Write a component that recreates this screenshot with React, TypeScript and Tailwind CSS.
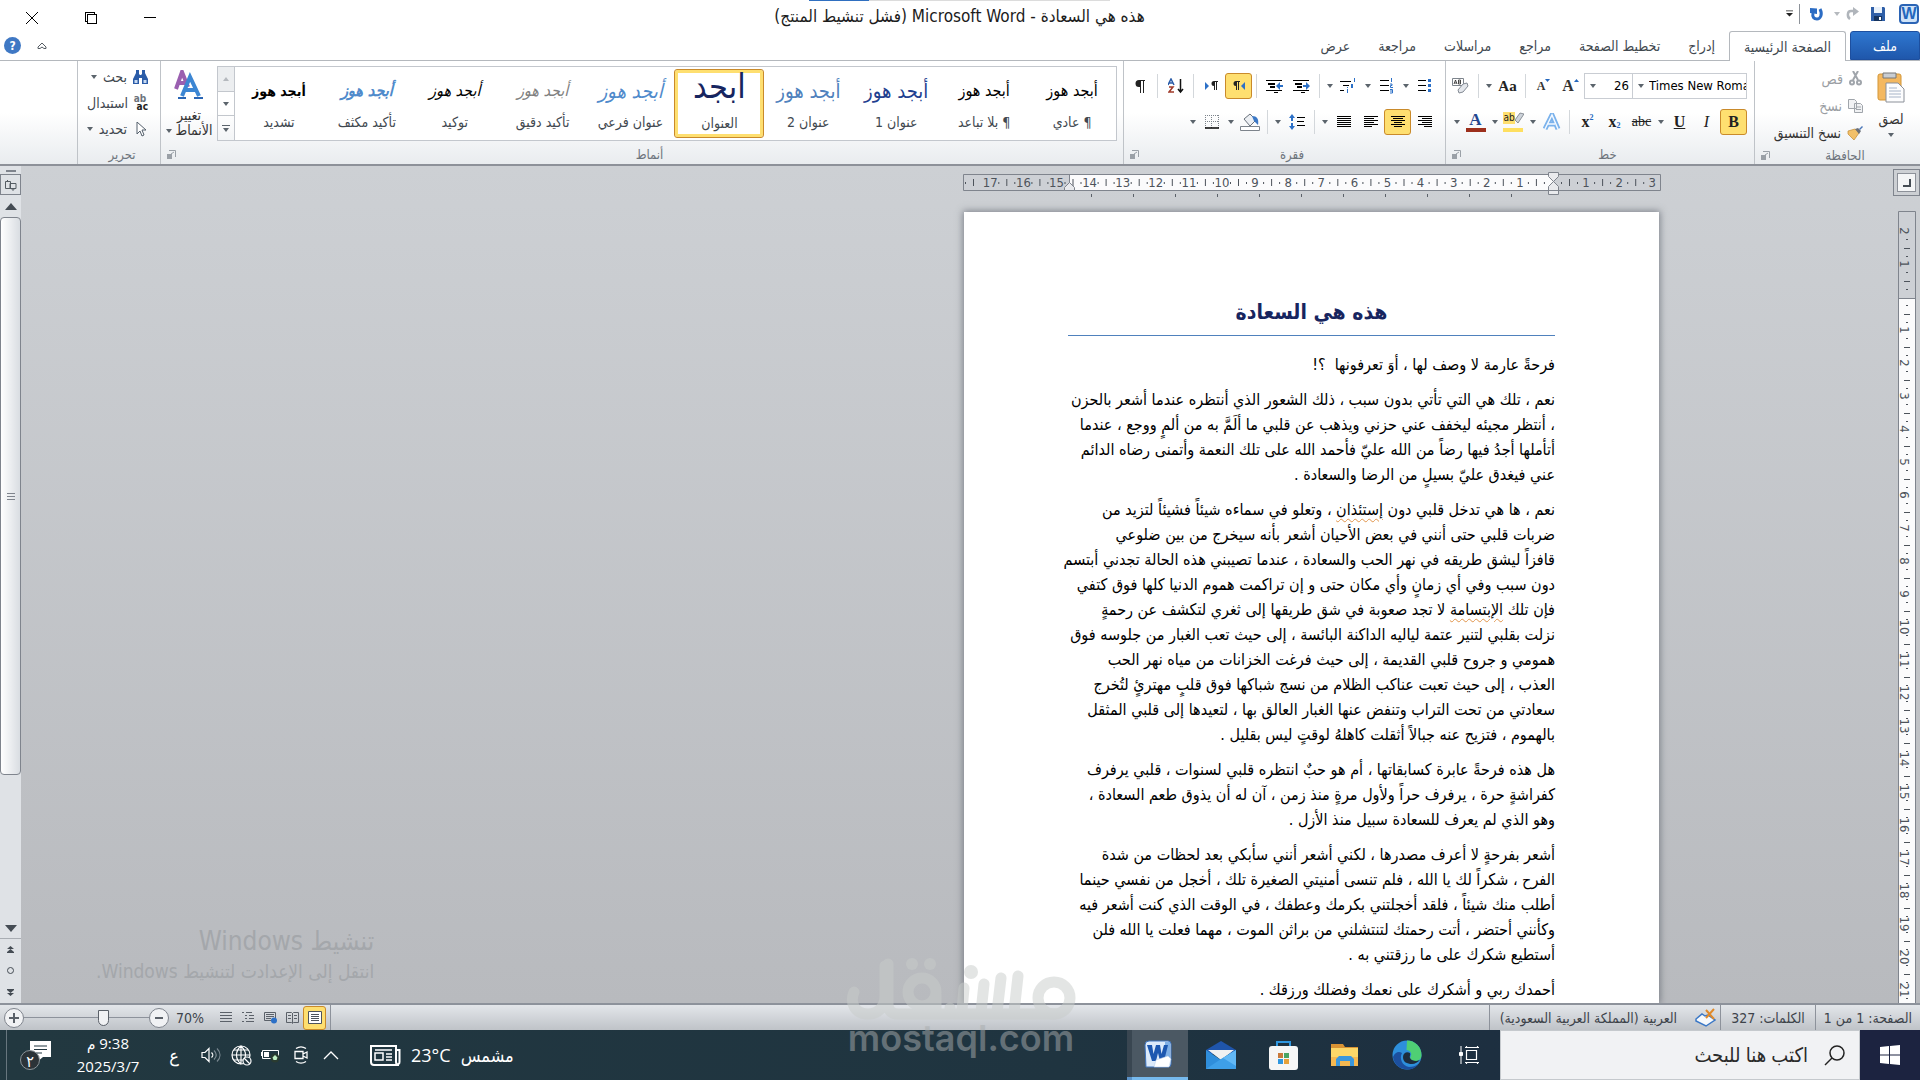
import type { ReactNode } from 'react'
import clsx from 'clsx'

const DOC_TITLE = 'هذه هي السعادة'

const PARAGRAPHS: string[][] = [
  ['فرحةً عارمة لا وصف لها ، أوَ تعرفونها  ؟!'],
  [
    'نعم ، تلك هي التي تأتي بدون سبب ، ذلك الشعور الذي أنتظره عندما أشعر بالحزن',
    '، أنتظر مجيئه ليخفف عني حزني ويذهب عن قلبي ما ألَمَّ به من ألمٍ ووجع ، عندما',
    'أتأملها أجدُ فيها رضاً من الله عليّ فأحمد الله على تلك النعمة وأتمنى رضاه الدائم',
    'عني فيغدق عليّ بسيلٍ من الرضا والسعادة .',
  ],
  [
    'نعم ، ها هي تدخل قلبي دون *إستئذان* ، وتعلو في سماءه شيئاً فشيئاً لتزيد من',
    'ضربات قلبي حتى أنني في بعض الأحيان أشعر بأنه سيخرج من بين ضلوعي',
    'قافزاً ليشق طريقه في نهر الحب والسعادة ، عندما تصيبني هذه الحالة تجدني أبتسم',
    'دون سبب وفي أي زمانٍ وأي مكان حتى و إن تراكمت هموم الدنيا كلها فوق كتفي',
    'فإن تلك *الإبتسامة* لا تجد صعوبة في شق طريقها إلى ثغري لتكشف عن رحمةٍ',
    'نزلت بقلبي لتنير عتمة لياليه الداكنة البائسة ، إلى حيث تعب الغبار من جلوسه فوق',
    'همومي و جروح قلبي القديمة ، إلى حيث فرغت الخزانات من مياه نهر الحب',
    'العذب ، إلى حيث تعبت عناكب الظلام من نسج شباكها فوق قلبٍ مهترئٍ لتُخرج',
    'سعادتي من تحت التراب وتنفض عنها الغبار العالق بها ، لتعيدها إلى قلبي المثقل',
    'بالهموم ، فتزيح عنه جبالاً أثقلت كاهلهُ لوقتٍ ليس بقليل .',
  ],
  [
    'هل هذه فرحةً عابرة كسابقاتها ، أم هو حبٌ انتظره قلبي لسنوات ، قلبي يرفرف',
    'كفراشةٍ حرة ، يرفرف حراً ولأول مرةٍ منذ زمن ، آن له أن يذوق طعم السعادة ،',
    'وهو الذي لم يعرف للسعادة سبيل منذ الأزل .',
  ],
  [
    'أشعر بفرحةٍ لا أعرف مصدرها ، لكني أشعر أنني سأبكي بعد لحظات من شدة',
    'الفرح ، شكراً لك يا الله ، فلم تنسى أمنيتي الصغيرة تلك ، أخجل من نفسي حينما',
    'أطلب منك شيئاً ، فلقد أخجلتني بكرمك وعطفك ، في الوقت الذي كنت أشعر فيه',
    'وكأنني أحتضر ، أتت رحمتك لتنتشلني من براثن الموت ، مهما فعلت يا الله فلن',
    'أستطيع شكرك على ما رزقتني به .',
  ],
  ['أحمدك ربي و أشكرك على نعمك وفضلك ورزقك .'],
]

interface StyleTile {
  label: string
  sample: string
  look: string
  active?: boolean
}

const STYLE_TILES: StyleTile[] = [
  { label: '¶ عادي', sample: 'أبجد هوز', look: 'text-base text-black' },
  { label: '¶ بلا تباعد', sample: 'أبجد هوز', look: 'text-base text-black' },
  { label: 'عنوان 1', sample: 'أبجد هوز', look: 'text-xl text-[#1f3f8f]' },
  { label: 'عنوان 2', sample: 'أبجد هوز', look: 'text-xl text-[#4f81bd]' },
  { label: 'العنوان', sample: 'ابجد', look: 'pb-3 text-[34px] leading-8 text-[#17255f]', active: true },
  { label: 'عنوان فرعي', sample: 'أبجد هوز', look: 'text-xl italic text-[#4f8acb]' },
  { label: 'تأكيد دقيق', sample: 'أبجد هوز', look: 'text-base italic text-[#808080]' },
  { label: 'توكيد', sample: 'أبجد هوز', look: 'text-base italic text-black' },
  { label: 'تأكيد مكثف', sample: 'أبجد هوز', look: 'text-base italic font-bold text-[#4f8acb]' },
  { label: 'تشديد', sample: 'أبجد هوز', look: 'text-sm font-bold text-black' },
]

const TABS = ['إدراج', 'تخطيط الصفحة', 'مراجع', 'مراسلات', 'مراجعة', 'عرض']

/* ---------- small shared pieces ---------- */

function Caret({ faded }: { faded?: boolean }) {
  return (
    <svg width="6" height="4" viewBox="0 0 6 4" className="shrink-0">
      <path d="M0 0h6L3 4z" fill={faded ? '#b5b9be' : '#5b646c'} />
    </svg>
  )
}

function Sep() {
  return (
    <span className="flex w-[9px] justify-center">
      <span className="h-6 w-px bg-[#d3d7db]" />
    </span>
  )
}

interface ToolProps {
  label: string
  active?: boolean
  children: ReactNode
}

function Tool({ label, active, children }: ToolProps) {
  return (
    <button
      dir="ltr"
      aria-label={label}
      aria-pressed={active}
      className={clsx(
        'flex h-[26px] w-[27px] shrink-0 items-center justify-center rounded-[3px]',
        active && 'border border-[#c98a2b] bg-[#fedf70]',
      )}
    >
      {children}
    </button>
  )
}

function SplitTool({ label, children }: ToolProps) {
  return (
    <div className="flex h-[26px] w-[38px] shrink-0 items-center">
      <button dir="ltr" aria-label={label} className="flex h-full w-[27px] items-center justify-center">
        {children}
      </button>
      <button aria-label={`خيارات ${label}`} className="flex h-full w-[11px] items-center justify-center">
        <Caret />
      </button>
    </div>
  )
}

interface GroupProps {
  title: string
  launcher?: boolean
  className: string
  children: ReactNode
}

function Group({ title, launcher, className, children }: GroupProps) {
  return (
    <section className={clsx('flex flex-col border-l border-[#bfc3c8]', className)}>
      <div className="flex-1">{children}</div>
      <div className="flex h-[19px] items-center pl-1.5 text-[13px] text-[#6d747c]">
        <h2 className="flex-1 text-center">{title}</h2>
        {launcher && (
          <button aria-label={`إعدادات ${title}`}>
            <svg width="9" height="9" viewBox="0 0 9 9" fill="none">
              <path d="M2 .5h6.500v6.500" stroke="#9aa0a7" />
              <path d="M0 4h5v5H0z" fill="#9aa0a7" />
              <path d="M4 4l3-2" stroke="#9aa0a7" />
            </svg>
          </button>
        )}
      </div>
    </section>
  )
}

function Lines({ rows }: { rows: [number, number][] }) {
  return (
    <svg width="16" height="13" viewBox="0 0 16 13" shapeRendering="crispEdges">
      {rows.map(([x, w], i) => (
        <rect key={i} x={x} y={i * 2} width={w} height="1" fill="#000" />
      ))}
    </svg>
  )
}

const ALIGN_RIGHT: [number, number][] = [[1, 14], [5, 10], [1, 14], [5, 10], [1, 14], [7, 8]]
const ALIGN_CENTER: [number, number][] = [[1, 14], [3, 10], [1, 14], [4, 8], [1, 14], [4, 8]]
const ALIGN_LEFT: [number, number][] = [[1, 14], [1, 10], [1, 14], [1, 10], [1, 14], [1, 8]]
const ALIGN_FULL: [number, number][] = [[1, 14], [1, 14], [1, 14], [1, 14], [1, 14], [1, 14]]

function WordLogo({ size }: { size: number }) {
  return (
    <svg width={size} height={size} viewBox="0 0 28 28">
      <path d="M5 1h19a3 3 0 013 3v20a3 3 0 01-3 3H2L1 5a4 4 0 014-4z" fill="#dceafa" stroke="#3f74be" />
      <path d="M21 2h5v16h-5z" fill="#7fb0e6" />
      <path d="M3 5h5l1.500 9L12 5h4l1.500 9L20 5h4l-4 16h-4l-2-8-2 8H8z" fill="#1c57b0" />
      <path d="M12 20l12-4 3 3-2 8H10z" fill="#fff" stroke="#b5cbe6" strokeWidth=".5" />
    </svg>
  )
}

/* ---------- title bar and tabs ---------- */

function TitleBar() {
  return (
    <header className="flex h-[31px] items-start justify-between bg-white">
      <div className="flex h-[27px] items-center gap-1.5 pr-px">
        <span className="flex size-5 items-center justify-center rounded-sm border-2 border-[#2b64b5] bg-[#cfe3f8] font-['Liberation_Sans',sans-serif] text-base leading-none font-bold text-[#2467bd]">
          W
        </span>
        <button aria-label="حفظ" className="mr-2">
          <svg width="14" height="14" viewBox="0 0 14 14">
            <path d="M0 0h13l1 1v13H0z" fill="#2f5fa8" />
            <path d="M3 0h8v6H3z" fill="#e9f1fa" />
            <path d="M3 9h8v5H3z" fill="#16345f" />
            <path d="M8 10h2v3H8z" fill="#fff" />
          </svg>
        </button>
        <button aria-label="إعادة" className="mr-1.5">
          <svg width="13" height="14" viewBox="0 0 13 14" fill="none">
            <path d="M4 12C1 10 1 4 5 4h4" stroke="#b0b5bb" strokeWidth="2.500" />
            <path d="M7 0l6 4.500L7 9z" fill="#b0b5bb" />
          </svg>
        </button>
        <Caret faded />
        <button aria-label="تراجع" className="mr-1">
          <svg width="14" height="14" viewBox="0 0 14 14" fill="none">
            <path d="M3 6c-1 4 1 6 4 6s6-4 3-10" stroke="#2b6cc4" strokeWidth="3" />
            <path d="M0 1l7 .5V7L0 6z" fill="#2b6cc4" />
          </svg>
        </button>
        <span className="mr-1 h-5 w-px bg-[#8d9299]" />
        <button aria-label="تخصيص شريط أدوات الوصول السريع">
          <svg width="7" height="7" viewBox="0 0 8 7">
            <path d="M0 0h8v1H0zM0 3h8L4 7z" fill="#222" />
          </svg>
        </button>
      </div>
      <h1 className="pt-1.5 pr-6 text-[17px] leading-5 text-[#1c1c1c]">هذه هي السعادة - Microsoft Word (فشل تنشيط المنتج)</h1>
      <div className="flex h-9 items-center gap-[45px] pl-[25px] text-black">
        <button aria-label="تصغير">
          <svg width="14" height="14" viewBox="0 0 14 14" shapeRendering="crispEdges"><path d="M1 6.500h12" stroke="currentColor" /></svg>
        </button>
        <button aria-label="استعادة">
          <svg width="14" height="14" viewBox="0 0 14 14" fill="none" stroke="currentColor" shapeRendering="crispEdges">
            <path d="M3.500 3.500h9v9h-9zM3 10.500H1.500v-9h9V3" />
          </svg>
        </button>
        <button aria-label="إغلاق">
          <svg width="14" height="14" viewBox="0 0 14 14"><path d="M1 1l12 12M13 1L1 13" stroke="currentColor" /></svg>
        </button>
      </div>
    </header>
  )
}

function TabStrip() {
  return (
    <nav className="flex h-[30px] items-stretch border-b border-[#b4b8bd] bg-white text-sm text-[#41484f]">
      <button className="w-[70px] rounded-t-[3px] border border-[#1d4f9f] bg-linear-to-b from-[#2f77d0] to-[#1f57ab] text-white">
        ملف
      </button>
      <button className="-mb-px mr-1 w-[117px] rounded-t-[3px] border border-b-0 border-[#b4b8bd] bg-white">
        الصفحة الرئيسية
      </button>
      {TABS.map((tab) => (
        <button key={tab} className="px-3.5">
          {tab}
        </button>
      ))}
      <div className="mr-auto flex items-center gap-4 pl-1">
        <button aria-label="تصغير الشريط">
          <svg width="10" height="8" viewBox="0 0 10 8" fill="none" stroke="#555c63">
            <path d="M1 5l4-4 4 4v1.500H7L5 5 3 6.500H1z" />
          </svg>
        </button>
        <button
          aria-label="تعليمات"
          className="flex size-[17px] items-center justify-center rounded-full bg-[#3f78c4] text-xs font-bold text-white"
        >
          ?
        </button>
      </div>
    </nav>
  )
}

/* ---------- ribbon ---------- */

function ClipboardGroup() {
  return (
    <Group title="الحافظة" launcher className="w-[166px]">
      <div className="flex pr-[11px] pt-1 text-sm">
        <button className="flex w-9 flex-col items-center pt-1.5 text-[#333]">
          <svg width="28" height="32" viewBox="0 0 28 32">
            <rect x="1" y="3" width="23" height="26" rx="2" fill="#f4b860" stroke="#d39637" />
            <path d="M6 2h13v5H6z" fill="#c9cdd2" stroke="#777" />
            <path d="M9 12h12l6 6v13H9z" fill="#fdfdfe" stroke="#8b9099" />
            <path d="M12 17h8M12 20h12M12 23h12M12 26h12" stroke="#a7b4c8" />
          </svg>
          <span className="mt-1.5 mb-1 leading-5">لصق</span>
          <Caret />
        </button>
        <div className="mr-[10px] flex flex-col text-[#9a9ea3]">
          <button className="flex h-[27px] items-center gap-1.5">
            <svg width="14" height="15" viewBox="0 0 14 15" fill="none" stroke="#a0a5ab" strokeWidth="2">
              <path d="M4 0l5 9M9 0L4 9" />
              <circle cx="3" cy="11.500" r="2" />
              <circle cx="10" cy="11.500" r="2" />
            </svg>
            قص
          </button>
          <button className="flex h-[27px] items-center gap-1.5">
            <svg width="15" height="14" viewBox="0 0 15 14" fill="#f1f2f4" stroke="#a0a5ab">
              <path d="M.5.5h6l2 2v7h-8zM6.500 4.500h6l2 2v7h-8zM8 8h5M8 10.500h5" />
            </svg>
            نسخ
          </button>
          <button className="flex h-[27px] items-center gap-1.5 whitespace-nowrap text-[#333]">
            <svg width="16" height="14" viewBox="0 0 16 14">
              <path d="M1 5l7-2 4 4-5 7-6-6z" fill="#f2c069" stroke="#c08a34" strokeWidth=".7" />
              <path d="M8 3l3-1 3 3-2 3z" fill="#6b7078" />
              <path d="M12 3l3-3 1 1-3 3z" fill="#4a77b8" />
            </svg>
            نسخ التنسيق
          </button>
        </div>
      </div>
    </Group>
  )
}

function FontGroup() {
  return (
    <Group title="خط" launcher className="w-[309px]">
      <div className="flex flex-col gap-[10px] pr-[7px] pt-3">
        <div className="flex items-center">
          <div dir="ltr" className="flex h-[26px] w-[115px] items-center border border-[#c9cdd3] bg-white">
            <button aria-label="قائمة الخطوط" className="flex w-4 shrink-0 justify-center"><Caret /></button>
            <input aria-label="الخط" defaultValue="Times New Roman" className="w-[97px] text-[13px] text-black outline-none" />
          </div>
          <div dir="ltr" className="flex h-[26px] w-12 items-center border border-r-0 border-[#c9cdd3] bg-white">
            <button aria-label="قائمة الأحجام" className="flex w-4 shrink-0 justify-center"><Caret /></button>
            <input aria-label="حجم الخط" defaultValue="26" className="w-7 text-right text-[13px] text-black outline-none" />
          </div>
          <Tool label="تكبير الخط">
            <span className="font-['Liberation_Serif',serif] text-base font-bold text-[#333]">A</span>
            <svg width="5" height="3" className="mb-3"><path d="M0 3h5L2.500 0z" fill="#2467bd" /></svg>
          </Tool>
          <Tool label="تصغير الخط">
            <span className="font-['Liberation_Serif',serif] text-xs font-bold text-[#333]">A</span>
            <svg width="5" height="3" className="mb-3"><path d="M0 0h5L2.500 3z" fill="#2467bd" /></svg>
          </Tool>
          <Sep />
          <SplitTool label="تغيير حالة الأحرف">
            <span className="font-['Liberation_Serif',serif] text-[15px] font-bold text-[#222]">Aa</span>
          </SplitTool>
          <Sep />
          <Tool label="مسح التنسيق">
            <svg width="17" height="16" viewBox="0 0 17 16" fill="none">
              <path d="M.5.5h11v7H.5z" fill="#fff" stroke="#7d848c" />
              <path d="M2 6l1.500-4L5 6M2.500 5h2M6.500 2v4h2v-4zM6.500 4h2" stroke="#222" strokeWidth=".8" />
              <path d="M6 12l5-6 4-1 1 3-5 6-4 1z" fill="#e4e7ec" stroke="#848b94" />
            </svg>
          </Tool>
        </div>
        <div className="flex items-center font-['Liberation_Serif',serif] text-base text-[#222]">
          <Tool label="غامق" active><span className="font-bold">B</span></Tool>
          <Tool label="مائل"><span className="italic">I</span></Tool>
          <SplitTool label="تسطير"><span className="font-bold underline">U</span></SplitTool>
          <Tool label="يتوسطه خط"><span className="text-sm line-through">abc</span></Tool>
          <Tool label="منخفض">
            <span className="font-bold">x</span>
            <span className="pt-2 text-[8px] font-bold text-[#2467bd]">2</span>
          </Tool>
          <Tool label="مرتفع">
            <span className="font-bold">x</span>
            <span className="pb-2 text-[8px] font-bold text-[#2467bd]">2</span>
          </Tool>
          <Sep />
          <SplitTool label="تأثيرات النص">
            <svg width="18" height="18" viewBox="0 0 18 18" fill="none">
              <path d="M2 16L9 2l6 14M5 11h7" stroke="#7ab2ec" strokeWidth="5" />
              <path d="M2 16L9 2l6 14M5 11h7" stroke="#f4f9ff" strokeWidth="1.500" />
            </svg>
          </SplitTool>
          <SplitTool label="لون التمييز">
            <span className="flex flex-col items-center">
              <span className="flex h-4 items-start">
                <span className="bg-[#fedf70] font-['DejaVu_Sans_Condensed',sans-serif] text-[10px] leading-3">ab</span>
                <svg width="9" height="12" viewBox="0 0 9 12"><path d="M0 8l5-7 4 1-6 9z" fill="#cdd3da" stroke="#666d76" strokeWidth=".7" /></svg>
              </span>
              <span className="h-1 w-5 bg-[#fedf60]" />
            </span>
          </SplitTool>
          <SplitTool label="لون الخط">
            <span className="flex flex-col items-center">
              <span className="h-4 text-[17px] leading-4 font-bold text-[#24468f]">A</span>
              <span className="h-1 w-5 bg-[#9c2f1c]" />
            </span>
          </SplitTool>
        </div>
      </div>
    </Group>
  )
}

function IndentIcon({ flip }: { flip?: boolean }) {
  return (
    <svg width="17" height="15" viewBox="0 0 17 15">
      <path d="M0 1h16v1H0zM2 4h7v2H2zM4 7h5v2H4zM0 11h16v1H0zM8 13h4v1H8z" fill="#000" />
      <path d={flip ? 'M10 6h3V3l4 4-4 4V8h-3z' : 'M17 6h-3V3l-4 4 4 4V8h3z'} fill="#2c70c7" />
    </svg>
  )
}

function ParagraphGroup() {
  return (
    <Group title="فقرة" launcher className="w-[322px]">
      <div className="flex flex-col gap-[10px] pr-[7px] pt-3">
        <div className="flex items-center text-[#222]">
          <SplitTool label="تعداد نقطي">
            <svg width="14" height="14" viewBox="0 0 14 14">
              <path d="M0 1h8v1H0zM0 6h8v1H0zM0 11h8v1H0z" fill="#000" />
              <path d="M10 0h3v3h-3zM10 5h3v3h-3zM10 10h3v3h-3z" fill="#2c70c7" />
            </svg>
          </SplitTool>
          <SplitTool label="ترقيم">
            <svg width="14" height="16" viewBox="0 0 14 16">
              <path d="M0 2h9v1H0zM0 7h9v1H0zM0 12h9v1H0z" fill="#000" />
              <path d="M11.500 0v4M10 6h2v1.500h-1.500V9.500H13M10 11.500h2.500v3.500H10M10 13h2" stroke="#2c70c7" fill="none" />
            </svg>
          </SplitTool>
          <SplitTool label="قائمة متعددة المستويات">
            <svg width="17" height="16" viewBox="0 0 17 16">
              <path d="M0 3h11v1H0zM3 7h6v1H3zM0 12h4v1H0z" fill="#000" />
              <path d="M14 0h1v4h-1zM11 6h2v4h-2zM7 9h1v1H7zM7 11h1v4H7z" fill="#2c70c7" />
            </svg>
          </SplitTool>
          <Sep />
          <Tool label="زيادة المسافة البادئة"><IndentIcon flip /></Tool>
          <Tool label="إنقاص المسافة البادئة"><IndentIcon /></Tool>
          <Sep />
          <Tool label="اتجاه النص من اليمين إلى اليسار" active>
            <svg width="13" height="10" viewBox="0 0 13 10">
              <path d="M3 0h5v1H7v8H6V1H5v8H4V5a2.500 2.500 0 010-5z" fill="#222" />
              <path d="M13 1v8L9 5z" fill="#2c70c7" />
            </svg>
          </Tool>
          <Tool label="اتجاه النص من اليسار إلى اليمين">
            <svg width="13" height="10" viewBox="0 0 13 10">
              <path d="M8 0h5v1h-1v8h-1V1h-1v8H9V5a2.500 2.500 0 010-5z" fill="#222" />
              <path d="M0 1v8l4-4z" fill="#2c70c7" />
            </svg>
          </Tool>
          <Sep />
          <Tool label="فرز">
            <svg width="16" height="16" viewBox="0 0 16 16" fill="none" strokeWidth="1.500">
              <path d="M0 7l3-6 3 6M1 5h4" stroke="#2a5ca8" />
              <path d="M1 9h4l-4 5h5" stroke="#a03a2a" />
              <path d="M12.500 1v13M10 11l2.500 3 2.500-3" stroke="#111" />
            </svg>
          </Tool>
          <Sep />
          <Tool label="إظهار الكل">
            <svg width="10" height="13" viewBox="0 0 10 13"><path d="M4 0h6v1H9v12H8V1H6v12H5V7H4a3.500 3.500 0 010-7z" fill="#222" /></svg>
          </Tool>
        </div>
        <div className="flex items-center">
          <Tool label="محاذاة إلى اليمين"><Lines rows={ALIGN_RIGHT} /></Tool>
          <Tool label="توسيط" active><Lines rows={ALIGN_CENTER} /></Tool>
          <Tool label="محاذاة إلى اليسار"><Lines rows={ALIGN_LEFT} /></Tool>
          <SplitTool label="ضبط"><Lines rows={ALIGN_FULL} /></SplitTool>
          <Sep />
          <SplitTool label="تباعد الأسطر">
            <svg width="16" height="16" viewBox="0 0 16 16">
              <path d="M8 3h8v1H8zM8 7h7v1H8zM8 11h8v1H8z" fill="#000" />
              <path d="M3 0l3 4H4v3H2V4H0zM3 16l3-4H4V9H2v3H0z" fill="#2c70c7" />
            </svg>
          </SplitTool>
          <Sep />
          <SplitTool label="تظليل">
            <svg width="20" height="20" viewBox="0 0 20 20">
              <path d="M4 7l6-5 6 6-6 6z" fill="#eceff3" stroke="#69717b" />
              <path d="M12 4c5 0 7 3 6 9l-4-4z" fill="#3b78c6" />
              <path d="M.5 14.500h19v4H.5z" fill="#fff" stroke="#7d848c" />
            </svg>
          </SplitTool>
          <SplitTool label="حدود">
            <svg width="14" height="14" viewBox="0 0 14 14" fill="none">
              <path d="M.5 0v13M6.500 0v13M13.500 0v13M0 .5h14M0 6.500h14" stroke="#7d848c" strokeDasharray="1 1" />
              <path d="M0 13h14" stroke="#000" strokeWidth="1.500" />
            </svg>
          </SplitTool>
        </div>
      </div>
    </Group>
  )
}

function StylesGroup() {
  return (
    <Group title="أنماط" launcher className="min-w-0 flex-1">
      <div className="flex pr-1.5 pt-[5px]">
        <div className="flex h-[75px] flex-1 border border-[#c3c7cd] bg-white">
          {STYLE_TILES.map((tile) => (
            <button
              key={tile.label}
              className={clsx(
                'my-0.5 flex flex-1 flex-col items-center justify-start whitespace-nowrap',
                tile.active && 'rounded-[3px] border border-[#c98a2b] ring-3 ring-[#fedf70] ring-inset',
              )}
            >
              <span className={clsx('flex h-[43px] items-center', tile.look)}>{tile.sample}</span>
              <span className="text-sm leading-5 text-[#41484f]">{tile.label}</span>
            </button>
          ))}
        </div>
        <div className="flex h-[75px] w-[17px] flex-col divide-y divide-[#c3c7cd] border border-r-0 border-[#c3c7cd]">
          <button aria-label="السابق" className="flex flex-1 items-center justify-center bg-[#eceef0]">
            <svg width="6" height="4"><path d="M0 4h6L3 0z" fill="#b5b9be" /></svg>
          </button>
          <button aria-label="التالي" className="flex flex-1 items-center justify-center"><Caret /></button>
          <button aria-label="المزيد" className="flex flex-1 flex-col items-center justify-center gap-0.5">
            <span className="h-px w-2 bg-[#5b646c]" />
            <Caret />
          </button>
        </div>
        <button className="flex w-14 flex-col items-center pt-1 text-sm leading-[15px] text-[#333]">
          <svg width="30" height="30" viewBox="0 0 30 30" fill="none">
            <path d="M2 19L8 2l6 15M5 13h8" stroke="#9a5fb0" strokeWidth="4" />
            <path d="M8 26l8-19 9 19M11 20h11" stroke="#3c86d3" strokeWidth="4" />
            <path d="M4 28h8M20 28h9" stroke="#2a66b5" strokeWidth="2" />
          </svg>
          <span className="pt-2">تغيير</span>
          <span className="flex items-center gap-1">الأنماط <Caret /></span>
        </button>
      </div>
    </Group>
  )
}

function EditingGroup() {
  return (
    <Group title="تحرير" className="w-[83px]">
      <div className="flex flex-col items-start pr-3 pt-0.5 text-sm text-[#41484f]">
        <button className="flex h-[27px] items-center gap-1.5">
          <svg width="15" height="14" viewBox="0 0 15 14">
            <path d="M3 0h3v4l1 1h1l1-1V0h3v3l3 6v5H9V8H6v6H0V9l3-6z" fill="#2b5ca8" />
            <path d="M1.500 10h3v3h-3zM10.500 10h3v3h-3z" fill="#c9dbf2" />
          </svg>
          بحث <Caret />
        </button>
        <button className="flex h-[26px] items-center gap-1">
          <span dir="ltr" className="flex w-4 flex-col text-[10px] leading-[8px] font-bold">
            <span className="text-[#6d747c]">ab</span>
            <span className="text-right text-[#222]">ac</span>
          </span>
          استبدال
        </button>
        <button className="flex h-[26px] items-center gap-1.5">
          <svg width="15" height="15" viewBox="0 0 15 15">
            <path d="M4 0v12l3-3 2 5 2-1-2-5h4z" fill="#fff" stroke="#55606c" />
          </svg>
          تحديد <Caret />
        </button>
      </div>
    </Group>
  )
}

function Ribbon() {
  return (
    <div className="flex h-[105px] border-b-2 border-[#8d9199] bg-linear-to-b from-white via-white to-[#e9ecef]">
      <ClipboardGroup />
      <FontGroup />
      <ParagraphGroup />
      <StylesGroup />
      <EditingGroup />
      <div className="w-[77px]" />
    </div>
  )
}

/* ---------- rulers ---------- */

const CM = 33.1

function range(from: number, to: number) {
  return Array.from({ length: to - from + 1 }, (_, i) => from + i)
}

// zero sits 590px from the left end; numbers count away from it both ways
function HorizontalRuler() {
  return (
    <svg width="698" height="26" viewBox="0 0 698 26" className="block" direction="ltr">
      <path d="M.5 3.500h697v16H.500z" fill="#cdd0d5" stroke="#7f848d" />
      <path d="M107 4h483v15H107z" fill="#fbfbfc" />
      <path d="M106.500 3v17" stroke="#7f848d" />
      {range(-3, 17).map((n) => {
        const x = 590 - n * CM
        return (
          <g key={n} fill="#4d535b">
            {n !== 0 && (
              <text x={x} y="16" fontSize="13" textAnchor="middle">
                {Math.abs(n)}
              </text>
            )}
            {n > -3 && (
              <>
                <rect x={x + 8} y="11" width="1" height="2" />
                <rect x={x + 16} y="8" width="1" height="7" />
                <rect x={x + 24} y="11" width="1" height="2" />
              </>
            )}
          </g>
        )
      })}
      <path d="M10.500 8v7M2.500 11v2" stroke="#4d535b" />
      {range(1, 11).map((n) => (
        <rect key={n} x={590 - n * 42} y="23" width="1" height="3" fill="#5b6169" />
      ))}
      <path d="M585.500 1.500h10v4l-5 5-5-5zM585.500 15.500l5-5 5 5v8h-10zM585 19.500h11" fill="#e9eaed" stroke="#7f848d" />
      <path d="M101.500 19.500v-3l5-5 5 5v3z" fill="#e9eaed" stroke="#7f848d" />
    </svg>
  )
}

function VerticalRuler() {
  return (
    <svg width="18" height="840" viewBox="0 0 18 840" className="block" direction="ltr">
      <path d="M.5.5h17v839H.500z" fill="#cdd0d5" stroke="#7f848d" />
      <path d="M1 87h16v753H1z" fill="#fbfbfc" />
      <path d="M0 87.500h18" stroke="#7f848d" />
      {range(-2, 21).map((n) => {
        const y = 86 + n * 33
        return (
          <g key={n} fill="#4d535b">
            {n !== 0 && (
              <text transform={`translate(2 ${y}) rotate(90)`} fontSize="13" textAnchor="middle">
                {Math.abs(n)}
              </text>
            )}
            <rect x="8" y={y + 8} width="2" height="1" />
            <rect x="6" y={y + 17} width="6" height="1" />
            <rect x="8" y={y + 25} width="2" height="1" />
          </g>
        )
      })}
    </svg>
  )
}

/* ---------- document area ---------- */

// words between asterisks carry the spell-check squiggle
function DocLine({ text }: { text: string }) {
  return (
    <span className="block whitespace-pre">
      {text.split('*').map((part, i) =>
        i % 2 ? (
          <span key={i} className="underline decoration-[#e0944a] decoration-wavy decoration-1 underline-offset-3">
            {part}
          </span>
        ) : (
          part
        ),
      )}
    </span>
  )
}

function Page() {
  return (
    <article className="w-[695px] flex-1 overflow-hidden bg-white px-[104px] pt-[84px] text-base leading-[25px] text-black shadow-[0_0_7px_1px_rgba(90,95,105,0.7)]">
      <h2 className="mb-4 border-b border-[#4f81bd] pb-[7px] text-center text-[21px] leading-8 font-bold text-[#17255f]">
        {DOC_TITLE}
      </h2>
      {PARAGRAPHS.map((lines) => (
        <p key={lines[0]} className="mb-[10px]">
          {lines.map((line) => (
            <DocLine key={line} text={line} />
          ))}
        </p>
      ))}
    </article>
  )
}

function ScrollBar() {
  return (
    <div className="flex w-[21px] flex-col items-center bg-[#dfe2e6]">
      <span className="mt-1 h-0.5 w-2.5 bg-[#7f848d]" />
      <button aria-label="كائن" className="mt-0.5 flex h-[21px] w-full items-center justify-center border border-[#7f848d]">
        <svg width="12" height="12" viewBox="0 0 12 12" fill="none" stroke="#555c63">
          <path d="M.5 2.500h5v7h-5zM5 4.500h6v5H5zM6 9l2 2.500L10 9M2 1l2 2" />
        </svg>
      </button>
      <button aria-label="تمرير لأعلى" className="flex h-[22px] items-center">
        <svg width="12" height="7"><path d="M0 7h12L6 0z" fill="#454c54" /></svg>
      </button>
      <div className="w-full flex-1">
        <div className="flex h-[558px] flex-col items-center justify-center gap-0.5 rounded-sm border border-[#7f848d] bg-linear-to-r from-white to-[#d9dde2]">
          <span className="h-px w-2 bg-[#7f848d]" />
          <span className="h-px w-2 bg-[#7f848d]" />
          <span className="h-px w-2 bg-[#7f848d]" />
        </div>
      </div>
      <button aria-label="تمرير لأسفل" className="flex h-5 w-full items-center justify-center border-b border-[#a9adb3]">
        <svg width="12" height="7"><path d="M0 0h12L6 7z" fill="#454c54" /></svg>
      </button>
      <button aria-label="الصفحة السابقة" className="flex h-[21px] items-center">
        <svg width="7" height="7"><path d="M0 3h7L3.500 0zM0 6h7L3.500 3zM0 6h7v1H0z" fill="#454c54" /></svg>
      </button>
      <button aria-label="تحديد كائن الاستعراض" className="flex h-[21px] items-center">
        <span className="size-[7px] rounded-full border border-[#454c54]" />
      </button>
      <button aria-label="الصفحة التالية" className="flex h-[22px] items-center">
        <svg width="7" height="7"><path d="M0 1h7L3.500 4zM0 4h7L3.500 7zM0 0h7v1H0z" fill="#454c54" /></svg>
      </button>
    </div>
  )
}

function Workspace() {
  return (
    <main className="relative flex min-h-0 flex-1 overflow-hidden bg-linear-to-b from-[#cdd0d4] to-[#b8babe]">
      <div className="flex w-[27px] flex-col">
        <button aria-label="نوع علامة الجدولة" className="mt-[3px] flex h-[27px] items-center justify-center border border-[#7f848d]">
          <span className="flex size-[19px] items-end justify-center border border-[#8d9199] bg-[#f4f5f6] pb-1">
            <span className="size-2 border-r-2 border-b-2 border-[#454c54]" />
          </span>
        </button>
        <div className="mr-1 mt-[15px] min-h-0 flex-1 overflow-hidden">
          <VerticalRuler />
        </div>
      </div>
      <div className="flex min-w-0 flex-1 flex-col items-start pr-[232px] pt-[5px]">
        <HorizontalRuler />
        <div className="mr-0.5 flex min-h-0 flex-1 flex-col pt-[15px]">
          <Page />
        </div>
      </div>
      <ScrollBar />
      <div className="pointer-events-none absolute bottom-[18px] left-24 text-[#a4a7ab]">
        <p className="text-[26px] leading-8">تنشيط Windows</p>
        <p className="text-[19px] leading-7">انتقل إلى الإعدادت لتنشيط Windows.</p>
      </div>
    </main>
  )
}

/* ---------- status bar ---------- */

const VIEW_ICONS: { label: string; d: string }[] = [
  { label: 'القراءة في وضع ملء الشاشة', d: 'M.5 1.500h5l1 1 1-1h5v10h-5l-1 1-1-1h-5zM6.500 2v10M2 4.500h3M2 7.500h3M8 4.500h3M8 7.500h3' },
  { label: 'تخطيط ويب', d: 'M.5 1.500h11v8H.500zM2 3.500h8M2 5.500h8M2 7.500h5' },
  { label: 'مخطط تفصيلي', d: 'M0 1.500h2M4 1.500h6M3 4.500h2M7 4.500h5M3 7.500h2M7 7.500h5M0 10.500h2M4 10.500h8' },
  { label: 'مسودة', d: 'M0 1.500h12M0 4.500h12M0 7.500h12M0 10.500h12' },
]

function StatusBar() {
  return (
    <footer className="flex h-[27px] items-stretch border-t-2 border-[#8d929b] bg-linear-to-b from-[#e3e6ea] to-[#bfc3c8] text-sm text-[#3d434a]">
      <button className="mr-2 pl-2">الصفحة: 1 من 1</button>
      <span className="w-px bg-[#8d929b]" />
      <button className="px-2.5">الكلمات: 327</button>
      <span className="w-px bg-[#8d929b]" />
      <button aria-label="تدقيق إملائي" className="pr-1 pl-3">
        <svg width="21" height="19" viewBox="0 0 21 19">
          <path d="M1 11l6-5 3 2 3-1 7 5-9 6-10-5z" fill="#f7f9fb" stroke="#3b78c6" strokeWidth="1.500" />
          <path d="M11 2l8 9M19 1l-8 9" stroke="#e08a2a" strokeWidth="2" />
        </svg>
      </button>
      <button className="pr-1.5 pl-2.5">العربية (المملكة العربية السعودية)</button>
      <span className="w-px bg-[#8d929b]" />
      <div className="mr-auto flex items-center">
        <span className="ml-1 h-full w-px bg-[#8d929b]" />
        <button
          aria-label="تخطيط الطباعة"
          className="flex h-6 w-[23px] items-center justify-center rounded-[3px] border border-[#c98a2b] bg-[#fedf70]"
        >
          <svg width="14" height="13" viewBox="0 0 14 13" fill="#fff" stroke="#4d535b">
            <path d="M.5.5h13v12H.500zM3 3.500h8M3 5.500h8M3 7.500h8M3 9.500h8" />
          </svg>
        </button>
        {VIEW_ICONS.map((v) => (
          <button key={v.label} aria-label={v.label} className="flex w-[22px] justify-center">
            <svg width="13" height="13" viewBox="0 0 13 13" fill="none" stroke="#5b6169">
              <path d={v.d} />
              {v.label === 'تخطيط ويب' && <circle cx="10" cy="9.500" r="3" fill="#2c70c7" stroke="none" />}
            </svg>
          </button>
        ))}
        <button className="mr-2 w-[34px] text-center">70%</button>
        <button aria-label="تصغير العرض" className="mr-1 flex size-5 items-center justify-center rounded-full border border-[#7f848d] bg-[#f1f2f4]">
          <span className="h-0.5 w-2 bg-[#5b6169]" />
        </button>
        <input
          type="range"
          aria-label="تكبير/تصغير"
          min="0"
          max="100"
          defaultValue="35"
          className="h-5 w-[125px] appearance-none bg-[linear-gradient(#8d929b,#8d929b)] bg-[length:100%_1px] bg-center bg-no-repeat [&::-webkit-slider-thumb]:h-4 [&::-webkit-slider-thumb]:w-[11px] [&::-webkit-slider-thumb]:appearance-none [&::-webkit-slider-thumb]:rounded-b-md [&::-webkit-slider-thumb]:border [&::-webkit-slider-thumb]:border-[#5b6169] [&::-webkit-slider-thumb]:bg-[#f1f2f4]"
        />
        <button aria-label="تكبير العرض" className="ml-1 flex size-5 items-center justify-center rounded-full border border-[#7f848d] bg-[#f1f2f4]">
          <svg width="10" height="10"><path d="M4 0h2v4h4v2H6v4H4V6H0V4h4z" fill="#5b6169" /></svg>
        </button>
      </div>
    </footer>
  )
}

/* ---------- taskbar ---------- */

function TaskView() {
  return (
    <svg width="20" height="20" viewBox="0 0 20 20" fill="none" stroke="#fff">
      <path d="M7.500 5.500h10v9h-10zM6 2.500h14M6 17.500h14M7.500 1v2M18.500 1v2M7.500 17v2M18.500 17v2" strokeWidth="1.200" />
      <path d="M2 1v6M2 11v8" />
      <path d="M.5 7.500h3v3h-3z" fill="#fff" />
    </svg>
  )
}

function EdgeLogo() {
  return (
    <svg width="30" height="30" viewBox="0 0 30 30">
      <circle cx="15" cy="15" r="14.500" fill="#2d8fdc" />
      <path d="M15 .5A14.500 14.500 0 0129.500 15c0 4-3 6-6 6-4 0-6-2-5-4 2-3 0-7-4-7z" fill="#4fcf74" />
      <path d="M10 13c-3 5 0 13 7 14 4 0 7-1 9-3-2 4-6 5.500-11 5.500C7 29 2 24 1 17c2-5 6-6 9-4z" fill="#1c4f9e" />
      <path d="M11 17c0 5 4 7 9 7 3 0 6-2 8-4-1 1-8 2-10-2-1-2 1-3 0-5-3-2-7 0-7 4z" fill="#1d2d3e" />
    </svg>
  )
}

function FolderLogo() {
  return (
    <svg width="28" height="24" viewBox="0 0 28 24">
      <path d="M0 1h12l2 3h13v8H0z" fill="#d99334" />
      <path d="M0 5h27v18H0z" fill="#fcd768" />
      <path d="M0 14h27v9H0z" fill="#f5b850" />
      <path d="M5 23v-7l3-3h12l3 3v7h-4v-5H9v5z" fill="#3a97dd" />
    </svg>
  )
}

function StoreLogo() {
  return (
    <svg width="29" height="29" viewBox="0 0 29 29">
      <path d="M8 6V1h13v5" fill="none" stroke="#2f97e0" strokeWidth="2" />
      <rect y="5" width="29" height="24" rx="3" fill="#f6f6f6" />
      <path d="M9 12h5v5H9z" fill="#c9793a" />
      <path d="M15 12h5v5h-5z" fill="#4aa564" />
      <path d="M9 18h5v5H9z" fill="#2f97e0" />
      <path d="M15 18h5v5h-5z" fill="#e5a13a" />
    </svg>
  )
}

function MailLogo() {
  return (
    <svg width="30" height="28" viewBox="0 0 30 28">
      <path d="M0 9l15-9 15 9v4H0z" fill="#1f55ab" />
      <path d="M2 9h26L15 19z" fill="#f1f1f1" />
      <path d="M0 9l15 10v9H0z" fill="#2f8edb" />
      <path d="M30 9L15 18 0 28h30z" fill="#3e9fe8" />
      <path d="M30 9L17 17l13 8z" fill="#62b8f5" />
    </svg>
  )
}

const PINNED: { label: string; icon: ReactNode }[] = [
  { label: 'عرض المهام', icon: <TaskView /> },
  { label: 'Microsoft Edge', icon: <EdgeLogo /> },
  { label: 'مستكشف الملفات', icon: <FolderLogo /> },
  { label: 'Microsoft Store', icon: <StoreLogo /> },
  { label: 'البريد', icon: <MailLogo /> },
]

function TrayCell({ label, children }: { label: string; children: ReactNode }) {
  return (
    <button aria-label={label} className="flex h-full w-[30px] items-center justify-center">
      {children}
    </button>
  )
}

function Tray() {
  return (
    <div className="mr-auto flex items-center">
      <button className="ml-6 flex items-center gap-2.5 text-lg">
        <span>مشمس</span>
        <span dir="ltr">23°C</span>
        <svg width="31" height="21" viewBox="0 0 31 21" fill="none" stroke="#fff" strokeWidth="2">
          <path d="M1 1h25v16a3 3 0 003 3H4a3 3 0 01-3-3zM26 5h3.500v12a2 2 0 01-3 2" />
          <path d="M5 8h8v7H5zM5 5h17M16 9h6M16 12h6M16 15h6" strokeWidth="1.500" />
        </svg>
      </button>
      <TrayCell label="إظهار الرموز المخفية">
        <svg width="16" height="9" viewBox="0 0 16 9" fill="none" stroke="#fff" strokeWidth="1.300"><path d="M1 8l7-7 7 7" /></svg>
      </TrayCell>
      <TrayCell label="اجتماع الآن">
        <svg width="18" height="18" viewBox="0 0 18 18" fill="none" stroke="#fff" strokeWidth="1.300">
          <path d="M3 5.500h8v7H3zM11 8l4-2v6l-4-2M4 2.500c3-2 7-2 10 0M4 15.500c3 2 7 2 10 0" />
        </svg>
      </TrayCell>
      <TrayCell label="البطارية">
        <svg width="20" height="16" viewBox="0 0 20 16" fill="none">
          <path d="M1.500 3.500h16v8h-16z" stroke="#fff" />
          <path d="M3 5h5v5H3zM0 5h1v4H0z" fill="#fff" />
          <circle cx="14" cy="11" r="4.500" fill="#2a3b30" />
          <path d="M14 8l2.500 2.500-1 2.500h-3l-1-2.500z" fill="#bff0c4" />
        </svg>
      </TrayCell>
      <TrayCell label="الشبكة">
        <svg width="21" height="21" viewBox="0 0 21 21" fill="none" stroke="#fff" strokeWidth="1.200">
          <circle cx="10" cy="10" r="9" />
          <path d="M1 10h18M10 1v18M3 5h14M3 15h9M10 1c-6 5-6 13 0 18M10 1c5 5 5 8 4 12" />
          <circle cx="16" cy="16" r="4" fill="#213640" />
          <path d="M13 13l6 6" />
        </svg>
      </TrayCell>
      <TrayCell label="الصوت">
        <svg width="20" height="16" viewBox="0 0 20 16" fill="none" stroke="#fff" strokeWidth="1.200">
          <path d="M1 5.500h3l4-4v13l-4-4H1zM10.500 5.500c2 2 2 3 0 5" />
          <path d="M13 3.500c3 3 3 6 0 9M16 1.500c4 4 4 9 0 13" stroke="#7a8890" />
        </svg>
      </TrayCell>
      <button aria-label="اللغة: العربية" className="mr-3 w-5 text-center text-lg">ع</button>
      <button className="mr-5 w-[72px] text-center text-[15px] leading-[23px]">
        <span className="block">9:38 م</span>
        <span dir="ltr" className="block">2025/3/7</span>
      </button>
      <button aria-label="الإعلامات" className="relative mr-5 ml-[13px]">
        <svg width="32" height="32" viewBox="0 0 32 32">
          <path d="M10 2h21v16h-8l-6 5v-5h-7z" fill="#fff" />
          <path d="M14 7h13M14 10.500h13M14 14h8" stroke="#213640" strokeWidth="1.200" />
          <circle cx="10" cy="21" r="9.500" fill="#2b3338" stroke="#8b9499" />
        </svg>
        <span className="absolute bottom-0.5 left-0 w-5 text-center text-base leading-4">٢</span>
      </button>
      <span className="ml-1.5 h-[50px] w-px bg-[#67767e]" />
    </div>
  )
}

function Taskbar() {
  return (
    <div className="flex h-[50px] items-stretch bg-linear-to-l from-[#1b2a40] via-[#1f3440] via-45% to-[#223840] font-['Open_Sans','DejaVu_Sans_Condensed',sans-serif] text-white">
      <button aria-label="ابدأ" className="flex w-[60px] items-center justify-center bg-[#1c2340]">
        <svg width="20" height="20" viewBox="0 0 20 20" fill="#fff">
          <path d="M0 2l9-1v8.500H0zM10 1l10-1v9.500H10zM0 10.500h9V19l-9-1zM10 10.500h10V20l-10-1z" />
        </svg>
      </button>
      <label className="flex w-[360px] items-center gap-4 border border-[#c5c9cd] bg-[#f1f2f4] pr-3.5">
        <svg width="21" height="21" viewBox="0 0 21 21" fill="none" stroke="#222" strokeWidth="1.500">
          <circle cx="13" cy="8" r="7" />
          <path d="M8 13l-7 7" />
        </svg>
        <input aria-label="بحث" placeholder="اكتب هنا للبحث" className="w-60 text-xl text-[#222] outline-none placeholder:text-[#2b2b2b]" />
      </label>
      {PINNED.map((p) => (
        <button key={p.label} aria-label={p.label} className="flex w-[62px] items-center justify-center">
          {p.icon}
        </button>
      ))}
      <button aria-label="Word" className="mr-0.5 flex w-14 items-center justify-center border-b-3 border-[#76b9ed] bg-[#4b5863] pr-1">
        <WordLogo size={28} />
      </button>
      <span className="w-[5px] border-b-3 border-[#5b93c9] bg-[#394651]" />
      <Tray />
    </div>
  )
}

// semi-transparent brand stamp over the bottom of the window
function Stamp() {
  return (
    <div dir="ltr" className="pointer-events-none absolute bottom-[26px] left-[845px] flex w-[232px] flex-col items-center opacity-50">
      <svg width="230" height="72" viewBox="0 0 230 72" fill="none" stroke="#c8ccca" strokeWidth="11" strokeLinecap="round">
        <circle cx="208" cy="48" r="16" />
        <path d="M208 64H110c-4 0-6-2-6-6M172 26l-4 36M155 28l-4 34M138 34l-3 28M118 38l-2 22" />
        <circle cx="76" cy="42" r="14" />
        <path d="M104 64H52c-6 0-10-3-10-10V14M90 46v16M8 42c-5 12 2 22 14 22 11 0 17-8 17-18V16" />
        <g fill="#c8ccca" stroke="none">
          <circle cx="125" cy="22" r="7" />
          <circle cx="66" cy="14" r="6" />
          <circle cx="84" cy="14" r="6" />
        </g>
      </svg>
      <span className="font-['Inter',sans-serif] text-[36px] leading-8 font-semibold text-[#a9adae]">mostaql.com</span>
    </div>
  )
}

export default function App() {
  return (
    <div
      dir="rtl"
      lang="ar"
      className="relative flex h-screen flex-col overflow-hidden bg-white font-['DejaVu_Sans_Condensed','DejaVu_Sans',sans-serif]"
    >
      <TitleBar />
      <TabStrip />
      <Ribbon />
      <Workspace />
      <StatusBar />
      <Taskbar />
      <Stamp />
      <div dir="ltr" className="absolute top-0 left-[809px] flex h-px w-[301px] bg-[#dcdcdc]">
        <span className="w-[60px] bg-[#2f6fc0]" />
      </div>
    </div>
  )
}
